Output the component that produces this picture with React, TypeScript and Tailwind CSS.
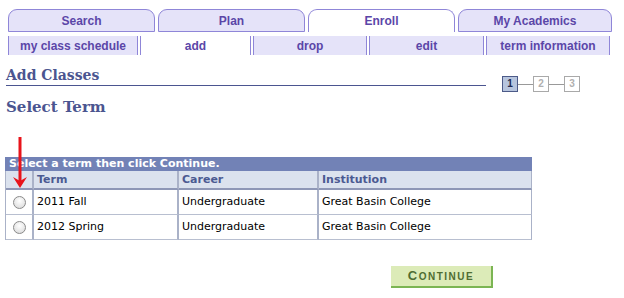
import React from "react";

const tabs = [
  { label: "Search", w: "w-[147px]", active: false },
  { label: "Plan", w: "w-[147px]", active: false },
  { label: "Enroll", w: "w-[147px]", active: true },
  { label: "My Academics", w: "w-[154px]", active: false },
];

const subTabs = [
  { label: "my class schedule", w: "w-[130px]", active: false },
  { label: "add", w: "w-[111px]", active: true },
  { label: "drop", w: "w-[114px]", active: false },
  { label: "edit", w: "w-[115px]", active: false },
  { label: "term information", w: "w-[124px]", active: false },
];

const rows = [
  { term: "2011 Fall", career: "Undergraduate", inst: "Great Basin College" },
  { term: "2012 Spring", career: "Undergraduate", inst: "Great Basin College" },
];

const Radio = () => (
  <span className="block w-[13px] h-[13px] rounded-full border border-[#8a8a8a] bg-[radial-gradient(circle_at_50%_35%,#ffffff,#d6d6d6)]" />
);

const Step = ({ n, active }: { n: string; active?: boolean }) => (
  <span
    className={
      active
        ? "flex items-center justify-center w-[16px] h-[16px] border border-[#4c5a88] bg-[#b7c5de] text-[10px] font-bold text-[#1e2a50] leading-none"
        : "flex items-center justify-center w-[16px] h-[16px] border border-[#a9a9a9] bg-white text-[10px] font-bold text-[#b0b0b0] leading-none"
    }
  >
    {n}
  </span>
);

export default function App() {
  return (
    <div className="w-[624px] h-[298px] bg-white overflow-hidden font-['Liberation_Sans',Arial,sans-serif]">
      {/* top tabs */}
      <div className="flex items-end pt-[9px] pl-[8px] gap-[3px]">
        {tabs.map((t) => (
          <div
            key={t.label}
            className={
              t.active
                ? `${t.w} h-[23px] flex items-center justify-center rounded-t-[9px] border border-b-0 border-[#8f86d8] bg-white text-[12px] font-bold text-[#5b46a8]`
                : `${t.w} h-[23px] flex items-center justify-center rounded-t-[9px] border border-[#8f86d8] bg-[#e5e3f9] text-[12px] font-bold text-[#5b46a8]`
            }
          >
            {t.label}
          </div>
        ))}
      </div>
      {/* sub tabs */}
      <div className="flex pt-[4px] pl-[8px] gap-[2px]">
        {subTabs.map((t) => (
          <div
            key={t.label}
            className={
              t.active
                ? `${t.w} h-[19px] flex items-center justify-center border-x border-[#8f86d8] bg-white text-[12px] font-bold text-[#5b46a8]`
                : `${t.w} h-[19px] flex items-center justify-center border-x border-[#8f86d8] bg-[#e5e3f9] text-[12px] font-bold text-[#5b46a8]`
            }
          >
            {t.label}
          </div>
        ))}
      </div>

      {/* page title */}
      <div className="flex items-start pl-[6px] pt-[12px]">
        <div className="w-[480px] border-b border-[#4b5590] pb-[2px]">
          <h1 className="font-['DejaVu_Serif',Georgia,serif] font-bold text-[14px] text-[#4b5590] leading-[16px]">
            Add Classes
          </h1>
        </div>
        <div className="flex items-center ml-[16px] mt-[9px]">
          <Step n="1" active />
          <span className="w-[15px] h-px bg-[#999]" />
          <Step n="2" />
          <span className="w-[15px] h-px bg-[#999]" />
          <Step n="3" />
        </div>
      </div>
      <h2 className="pl-[6px] pt-[6px] font-['DejaVu_Serif',Georgia,serif] font-bold text-[15px] text-[#4b5590] leading-[18px]">
        Select Term
      </h2>

      {/* table */}
      <div className="relative ml-[5px] mt-[41px] w-[527px] font-['DejaVu_Sans',Verdana,sans-serif]">
        <svg
          className="absolute left-[8px] top-[-20px]"
          width="14"
          height="52"
          viewBox="0 0 14 52"
        >
          <line x1="7" y1="0" x2="7" y2="44" stroke="#e8141b" strokeWidth="3" />
          <path d="M0 40 L7 51 L14 40 L7 44 Z" fill="#e8141b" />
        </svg>
        <div className="h-[14px] bg-[#7282b6] text-white text-[11px] font-bold leading-[14px] pl-[4px]">
          Select a term then click Continue.
        </div>
        <div className="grid grid-cols-[28px_145px_140px_1fr] border-l border-[#aab2c8]">
          <div className="h-[19px] bg-[#dbe2ee] border-r-2 border-b-2 border-r-[#aab2c8] border-b-[#8e97b6]" />
          <div className="h-[19px] bg-[#dbe2ee] border-r-2 border-b-2 border-r-[#aab2c8] border-b-[#8e97b6] text-[11px] font-bold text-[#4b5a92] pl-[3px] leading-[17px]">
            Term
          </div>
          <div className="h-[19px] bg-[#dbe2ee] border-r-2 border-b-2 border-r-[#aab2c8] border-b-[#8e97b6] text-[11px] font-bold text-[#4b5a92] pl-[3px] leading-[17px]">
            Career
          </div>
          <div className="h-[19px] bg-[#dbe2ee] border-r border-b-2 border-r-[#aab2c8] border-b-[#8e97b6] text-[11px] font-bold text-[#4b5a92] pl-[3px] leading-[17px]">
            Institution
          </div>
          {rows.map((r) => (
            <React.Fragment key={r.term}>
              <div className="h-[25px] flex items-center justify-center border-r-2 border-b border-r-[#aab2c8] border-b-[#b8bfd0]">
                <Radio />
              </div>
              <div className="h-[25px] flex items-center pl-[3px] border-r-2 border-b border-r-[#aab2c8] border-b-[#b8bfd0] text-[11px] text-black">
                {r.term}
              </div>
              <div className="h-[25px] flex items-center pl-[3px] border-r-2 border-b border-r-[#aab2c8] border-b-[#b8bfd0] text-[11px] text-black">
                {r.career}
              </div>
              <div className="h-[25px] flex items-center pl-[3px] border-r border-b border-r-[#aab2c8] border-b-[#b8bfd0] text-[11px] text-black">
                {r.inst}
              </div>
            </React.Fragment>
          ))}
        </div>
      </div>

      {/* continue */}
      <div className="pl-[391px] pt-[23px]">
        <button className="w-[102px] h-[22px] bg-[#dcebb8] border-r-2 border-b-2 border-[#7bb553] text-[#4f6d32] text-[10px] font-bold tracking-[1.5px] leading-none">
          <span className="text-[13px]">C</span>ONTINUE
        </button>
      </div>
    </div>
  );
}
